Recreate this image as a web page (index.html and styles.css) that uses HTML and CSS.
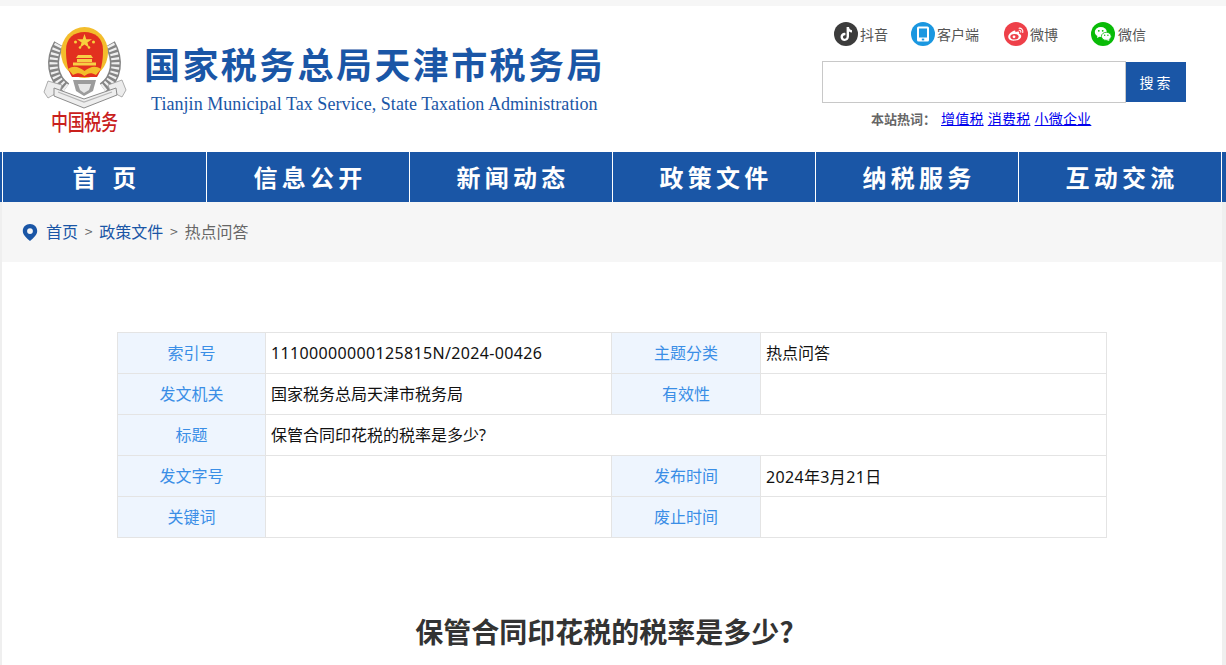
FILE: index.html
```html
<!DOCTYPE html>
<html lang="zh-CN">
<head>
<meta charset="utf-8">
<title>保管合同印花税的税率是多少?</title>
<link rel="stylesheet" href="styles.css">
</head>
<body>
<header class="site-header">
  <div class="brand">
    <svg class="emblem" viewBox="40 26 90 110" width="90" height="110" aria-hidden="true">
      <g fill="none">
        <path d="M66 88C52 78 50 60 59 44" stroke="#858585" stroke-width="11"/>
        <path d="M103 88C117 78 119 60 110 44" stroke="#858585" stroke-width="11"/>
        <path d="M66 88C52 78 50 60 59 44" stroke="#efefef" stroke-width="8" stroke-dasharray="2.200 2.400"/>
        <path d="M103 88C117 78 119 60 110 44" stroke="#efefef" stroke-width="8" stroke-dasharray="2.200 2.400"/>
      </g>
      <path d="M44 92L48 81L62 85L60 91L48 98Z" fill="#ececec" stroke="#9a9a9a" stroke-width=".8"/>
      <path d="M126 90L122 80L108 85L110 91L122 97Z" fill="#ececec" stroke="#9a9a9a" stroke-width=".8"/>
      <path d="M54 88L84 99L116 88L117 95L84 108L54 96Z" fill="#eeeeee" stroke="#8c8c8c" stroke-width="1"/>
      <path d="M58 92L84 102L112 92" fill="none" stroke="#b5b5b5" stroke-width="1.200"/>
      <path d="M73 80H96L93 91L84 96L76 91Z" fill="#9c9c9c"/>
      <path d="M78 84H91L89 90L84 93L80 90Z" fill="#e6e6e6"/>
      <ellipse cx="84.500" cy="52.500" rx="23.500" ry="25.500" fill="#f3bd2c"/>
      <g transform="translate(1 0)">
        <path d="M65 50C65 38 73 32 83.500 32C94 32 102 38 102 50C102 62 100 71 96 77L71 77C67 71 65 62 65 50Z" fill="#e2301f"/>
        <path d="M83.500 34L85.300 39.300H91L86.400 42.500L88.100 47.700L83.500 44.500L78.900 47.700L80.600 42.500L76 39.300H81.700Z" fill="#f7d13d"/>
        <circle cx="74.500" cy="42" r="1.500" fill="#f7d13d"/>
        <circle cx="92.500" cy="42" r="1.500" fill="#f7d13d"/>
        <circle cx="79" cy="47.500" r="1.300" fill="#f7d13d"/>
        <circle cx="88" cy="47.500" r="1.300" fill="#f7d13d"/>
        <path d="M77 55H90L92 58H75ZM76 59H91V62H76ZM72 62.500H95V65.500H72Z" fill="#f7cf45"/>
        <path d="M67 69C73 65 78 67 83.500 71C89 67 94 65 100 69L95 75C90 72 87 73 83.500 76C80 73 77 72 72 75Z" fill="#f3bd2c"/>
      </g>
      <text class="emblem-text" transform="translate(51 130) scale(1 1.250)" textLength="67" lengthAdjust="spacing">中国税务</text>
    </svg>
    <div class="brand-text">
      <h1 class="brand-title">国家税务总局天津市税务局</h1>
      <p class="brand-sub">Tianjin Municipal Tax Service, State Taxation Administration</p>
    </div>
  </div>
  <div class="tools">
    <ul class="social">
      <li class="social-item social-douyin">
        <svg class="social-icon" viewBox="0 0 24 24" aria-hidden="true"><circle cx="12" cy="12" r="12" fill="#3c3c3c"/><path d="M12.600 5H15C15.200 6.800 16.300 8 18 8.200V10.500C16.800 10.500 15.800 10.100 15 9.500V14.600C15 17.300 13 19 10.700 19C8.300 19 6.500 17.200 6.500 14.900C6.500 12.300 8.800 10.400 11.400 10.900V13.300C10.200 12.900 9 13.700 9 14.900C9 15.900 9.800 16.700 10.700 16.700C11.800 16.700 12.600 15.900 12.600 14.700Z" fill="#fff"/></svg>
        <span>抖音</span>
      </li>
      <li class="social-item social-client">
        <svg class="social-icon" viewBox="0 0 24 24" aria-hidden="true"><circle cx="12" cy="12" r="12" fill="#1a97e0"/><rect x="6" y="4.500" width="12" height="15" rx="1.500" fill="#fff"/><rect x="8" y="6.500" width="8" height="9" fill="#1a97e0"/><rect x="10.800" y="16.600" width="2.400" height="1.800" fill="#1a97e0"/></svg>
        <span>客户端</span>
      </li>
      <li class="social-item social-weibo">
        <svg class="social-icon" viewBox="0 0 24 24" aria-hidden="true"><circle cx="12" cy="12" r="12" fill="#ee4049"/><path d="M10.500 8.500C6.500 9.800 3.800 13 4.300 15.500C4.800 18 8 19.200 11.500 18.600C15 18 17.500 16 17.200 13.800C17 12.600 16 12 15 11.800C15.400 10.600 15.200 9.800 14.500 9.500C13.700 9.200 12.500 9.500 11.300 10.300C11.600 9 11.400 8.300 10.500 8.500Z" fill="#fff"/><ellipse cx="10.500" cy="14.700" rx="4.200" ry="2.800" fill="#ee4049"/><circle cx="10" cy="14.800" r="1.400" fill="#fff"/><path d="M15 6.200C17.200 5.900 19.300 7.700 18.800 10.500M15.200 8.300C16.300 8.200 17 9 16.800 10.100" fill="none" stroke="#fff" stroke-width="1.100" stroke-linecap="round"/></svg>
        <span>微博</span>
      </li>
      <li class="social-item social-wechat">
        <svg class="social-icon" viewBox="0 0 24 24" aria-hidden="true"><circle cx="12" cy="12" r="12" fill="#09bb07"/><ellipse cx="9.800" cy="10" rx="6" ry="5" fill="#fff"/><path d="M6.500 13.500L6 16L9 14.500Z" fill="#fff"/><ellipse cx="15.300" cy="14.300" rx="4.900" ry="4" fill="#fff" stroke="#09bb07" stroke-width=".8"/><path d="M17.500 17L18.500 19L15.500 18Z" fill="#fff"/><circle cx="7.800" cy="8.800" r=".9" fill="#09bb07"/><circle cx="11.700" cy="8.800" r=".9" fill="#09bb07"/><circle cx="13.700" cy="13.300" r=".7" fill="#09bb07"/><circle cx="16.900" cy="13.300" r=".7" fill="#09bb07"/></svg>
        <span>微信</span>
      </li>
    </ul>
    <form class="search">
      <input class="search-input" type="text" aria-label="搜索">
      <button class="search-btn" type="button">搜 索</button>
    </form>
    <p class="hot"><b class="hot-label">本站热词：</b><a href="#">增值税</a> <a href="#">消费税</a> <a href="#">小微企业</a></p>
  </div>
</header>
<nav class="nav">
  <a class="nav-item nav-home" href="#">首&nbsp;页</a>
  <a class="nav-item" href="#">信息公开</a>
  <a class="nav-item" href="#">新闻动态</a>
  <a class="nav-item" href="#">政策文件</a>
  <a class="nav-item" href="#">纳税服务</a>
  <a class="nav-item" href="#">互动交流</a>
</nav>
<main class="page">
  <div class="crumbs">
    <svg class="pin" viewBox="0 0 16 17" width="16" height="17" aria-hidden="true"><path fill-rule="evenodd" d="M8 0C3.800 0 .8 3 .8 7C.8 11 5 14.500 8 17C11 14.500 15.200 11 15.200 7C15.200 3 12.200 0 8 0ZM8 4.200A2.900 2.900 0 1 1 8 10A2.900 2.900 0 0 1 8 4.200Z" fill="#1a56a6"/></svg>
    <a class="crumb-link" href="#">首页</a><span class="crumb-sep">&gt;</span><a class="crumb-link" href="#">政策文件</a><span class="crumb-sep">&gt;</span><span class="crumb-current">热点问答</span>
  </div>
  <table class="meta">
    <colgroup><col class="col-label-a"><col class="col-value"><col class="col-label-b"><col class="col-value"></colgroup>
    <tr><th>索引号</th><td class="num">11100000000125815N/2024-00426</td><th>主题分类</th><td>热点问答</td></tr>
    <tr><th>发文机关</th><td>国家税务总局天津市税务局</td><th>有效性</th><td></td></tr>
    <tr><th>标题</th><td colspan="3">保管合同印花税的税率是多少?</td></tr>
    <tr><th>发文字号</th><td></td><th>发布时间</th><td class="num">2024年3月21日</td></tr>
    <tr><th>关键词</th><td></td><th>废止时间</th><td></td></tr>
  </table>
  <h2 class="article-title">保管合同印花税的税率是多少?</h2>
</main>
</body>
</html>
```
FILE: styles.css
```css
* { box-sizing: border-box; }
html, body { margin: 0; height: 665px; overflow: hidden; }
body {
  background: #efefef;
  font-family: "Noto Sans CJK SC", "Noto Sans", sans-serif;
  color: #000;
}
body::before {
  content: "";
  position: absolute;
  top: 0;
  left: 0;
  right: 0;
  height: 6px;
  background: #f6f6f6;
}
.site-header {
  height: 146px;
  margin-top: 6px;
  background: #fff;
  display: flex;
  justify-content: space-between;
}
.brand { display: flex; padding: 20px 0 0 40px; }
.emblem { display: block; flex: none; }
.emblem-text { font: 500 17px "Noto Sans CJK SC", sans-serif; fill: #c9201c; }
.brand-text { margin-left: 14px; padding-top: 15px; }
.brand-title {
  margin: 0;
  font-size: 36px;
  line-height: 44px;
  font-weight: 700;
  letter-spacing: 2.400px;
  color: #1a56a6;
  white-space: nowrap;
}
.brand-sub {
  margin: 8px 0 0 7px;
  font: 18px/22px "Liberation Serif", serif;
  letter-spacing: .05px;
  color: #1a56a6;
  white-space: nowrap;
}
.tools { width: 364px; margin-right: 40px; padding-top: 16px; }
.social { display: flex; list-style: none; margin: 0; padding: 0 0 0 12px; gap: 23px; height: 24px; }
.social-item { display: flex; align-items: center; gap: 2px; font-size: 14px; color: #555; }
.social-icon { width: 24px; height: 24px; flex: none; }
.social-client { margin-right: 2px; }
.social-weibo { margin-right: 10px; }
.social-wechat { gap: 3px; }
.search { display: flex; margin-top: 15px; align-items: center; }
.search-input { width: 304px; height: 42px; border: 1px solid #c8c8c8; background: #fff; padding: 0 8px; outline: none; }
.search-btn {
  width: 60px;
  height: 40px;
  border: 0;
  padding-right: 8px;
  background: #1a56a6;
  color: #fff;
  font: 14px "Noto Sans CJK SC", sans-serif;
}
.hot { margin: 5px 0 0 49px; font-size: 14px; line-height: 20px; color: #666; white-space: nowrap; word-spacing: 1px; }
.hot-label { font-size: 13px; font-weight: 700; margin-right: 5px; }
.hot a { color: #00e; text-decoration: underline; letter-spacing: .2px; }
.nav {
  height: 50px;
  background: #1a56a6;
  padding: 0 3px 0 2px;
  display: grid;
  grid-template-columns: 204px 203px 203px 203px 203px 204px;
}
.nav-item {
  border-left: 1px solid #fff;
  padding-left: 4px;
  color: #fff;
  text-decoration: none;
  font-size: 24px;
  font-weight: 700;
  letter-spacing: 4.200px;
  line-height: 50px;
  text-align: center;
}
.nav-home { word-spacing: 2px; }
.nav-item:last-child { border-right: 1px solid #fff; }
.page { margin: 0 4px 0 2px; background: #fff; height: 463px; overflow: hidden; }
.crumbs {
  height: 60px;
  background: #f6f6f6;
  display: flex;
  align-items: center;
  padding: 0 0 2px 20px;
  font-size: 16px;
}
.pin { margin: 2px 8px 0 0; flex: none; }
.crumb-link { color: #1a56a6; text-decoration: none; }
.crumb-sep { margin: 0 6.750px; color: #666; font-size: 14px; }
.crumb-current { color: #666; }
.meta {
  width: 989px;
  margin: 70px 0 0 115px;
  border-collapse: collapse;
  table-layout: fixed;
  font-size: 16px;
}
.meta .col-label-a { width: 148px; }
.meta .col-label-b { width: 149px; }
.meta .col-value { width: 346px; }
.meta tr { height: 41px; }
.meta th, .meta td { border: 1px solid #e4e4e4; padding: 0 5px 2px; }
.meta th { background: #eef5fe; color: #3a8ee6; font-weight: 400; text-align: center; }
.meta td { color: #111; font-family: "Noto Sans", "Noto Sans CJK SC", sans-serif; }
.meta td.num { letter-spacing: .35px; padding-bottom: 1px; }
.article-title {
  margin: 71px 0 0;
  padding-right: 15px;
  font-size: 28px;
  line-height: 44px;
  font-weight: 700;
  color: #333;
  text-align: center;
}
```
